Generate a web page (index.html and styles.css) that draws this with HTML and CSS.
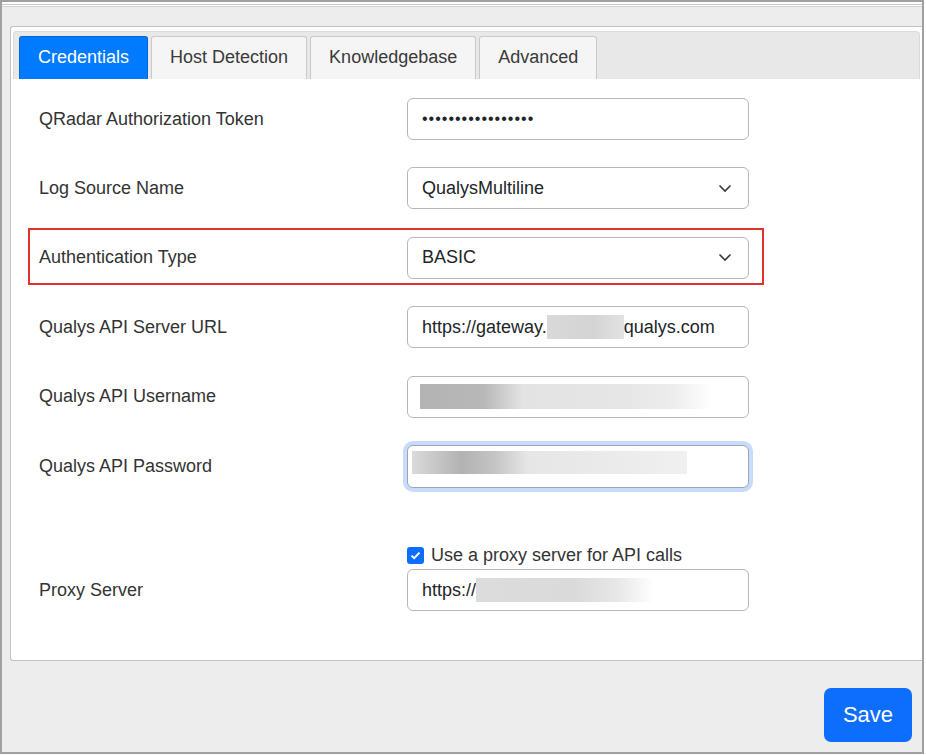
FILE: index.html
```html
<!DOCTYPE html>
<html lang="en">

<head>
    <meta charset="UTF-8">
    <meta name="viewport" content="width=device-width, initial-scale=1.0">
    <title>QRadar Qualys App Settings</title>
    <link rel="stylesheet" href="styles.css">
</head>

<body>
    <div class="frame">
        <div class="topline"></div>

        <div class="panel">
            <nav class="tabs">
                <div class="tab active">Credentials</div>
                <div class="tab">Host Detection</div>
                <div class="tab">Knowledgebase</div>
                <div class="tab">Advanced</div>
            </nav>

            <form class="settings">
                <div class="row">
                    <label>QRadar Authorization Token</label>
                    <input class="field" type="password" value="abcdefghijklmnopq">
                </div>

                <div class="row">
                    <label>Log Source Name</label>
                    <div class="field select">
                        <span>QualysMultiline</span>
                        <svg class="chevron" width="14" height="9" viewBox="0 0 14 9"><path d="M1.5 1.5 L7 7 L12.5 1.5" fill="none" stroke="#343a40" stroke-width="1.6"/></svg>
                    </div>
                </div>

                <div class="row marked">
                    <label>Authentication Type</label>
                    <div class="field select">
                        <span>BASIC</span>
                        <svg class="chevron" width="14" height="9" viewBox="0 0 14 9"><path d="M1.5 1.5 L7 7 L12.5 1.5" fill="none" stroke="#343a40" stroke-width="1.6"/></svg>
                    </div>
                </div>

                <div class="row">
                    <label>Qualys API Server URL</label>
                    <div class="field">
                        <span>https://gateway.</span><span class="blur blur-url"></span><span>qualys.com</span>
                    </div>
                </div>

                <div class="row">
                    <label>Qualys API Username</label>
                    <div class="field">
                        <span class="blur blur-user"></span>
                    </div>
                </div>

                <div class="row">
                    <label>Qualys API Password</label>
                    <div class="field focus">
                        <span class="blur blur-pass"></span>
                    </div>
                </div>

                <div class="row proxy">
                    <label>Proxy Server</label>
                    <div>
                        <div class="check">
                            <span class="box">
                                <svg width="11" height="9" viewBox="0 0 11 9"><path d="M1.5 4.6 L4.2 7.2 L9.5 1.6" fill="none" stroke="#fff" stroke-width="2"/></svg>
                            </span>
                            Use a proxy server for API calls
                        </div>
                        <div class="field">
                            <span>https://</span><span class="blur blur-proxy"></span>
                        </div>
                    </div>
                </div>
            </form>
        </div>

        <footer>
            <button class="save">Save</button>
        </footer>
    </div>
</body>

</html>
```

FILE: styles.css
```css
* {
    margin: 0;
    padding: 0;
    box-sizing: border-box;
}

body {
    background: #fff;
    font-family: "Liberation Sans", Arial, sans-serif;
    font-size: 18px;
    color: #333;
}

.frame {
    width: 924px;
    height: 754px;
    border: 2px solid #a0a0a0;
    background: #ededed;
    display: flex;
    flex-direction: column;
}

.topline {
    height: 5px;
    background: linear-gradient(#fff 0 2px, #c9c9c9 2px 3px, #fff 3px 4px, #d2d2d2 4px 5px);
}

.panel {
    margin: 19px 0 0 8px;
    padding: 4px 2px 49px 2px;
    background: #fff;
    border: 1px solid #c3c3c3;
    border-right: none;
    border-radius: 3px 0 0 3px;
}

/* tab strip */
.tabs {
    display: flex;
    gap: 3px;
    padding: 4px 5px 0;
    background: #e8e8e8;
    border: 1px solid #dadada;
    border-bottom: none;
    border-radius: 4px 4px 0 0;
}

.tab {
    height: 43px;
    line-height: 41px;
    padding: 0 18px;
    background: #f5f5f5;
    border: 1px solid #c9c9c9;
    border-bottom: none;
    border-radius: 3px 3px 0 0;
    color: #3a3a3a;
}

.tab.active {
    background: #007bff;
    border-color: #0069d9;
    color: #fff;
}

/* form rows */
.settings {
    display: flex;
    flex-direction: column;
    gap: 27.4px;
    padding: 19px 0 0 26px;
}

.row {
    display: grid;
    grid-template-columns: 368px 342px;
    align-items: center;
}

.row label {
    color: #333;
}

.row.marked {
    margin: -9px 0 -6px -11px;
    width: 736px;
    padding: 7px 0 4px 9px;
    border: 2px solid #e3312d;
}

.field {
    display: flex;
    align-items: center;
    height: 42px;
    padding: 0 14px;
    border: 1px solid #b4b8bd;
    border-radius: 6px;
    background: #fff;
    font-family: inherit;
    font-size: 18px;
    color: #212529;
    width: 342px;
    outline: none;
}

input.field[type="password"] {
    font-size: 16px;
    letter-spacing: 1px;
}

.select {
    justify-content: space-between;
}

.chevron {
    margin-right: 2px;
}

.focus {
    height: 43px;
    padding-left: 4px;
    border-color: #9ea6b0;
    box-shadow: 0 0 0 4px #c7dcfc;
}

.blur {
    display: inline-block;
    height: 24px;
}

.blur-url {
    width: 77px;
    background: linear-gradient(to right, #d9d9d9, #d4d4d4 60%, #e2e2e2);
}

.blur-user {
    width: 292px;
    height: 25px;
    margin-left: -2px;
    background: linear-gradient(to right, #b3b3b3 0, #b8b8b8 22%, #e3e3e3 35%, #e6e6e6 70%, #ececec 86%, #fff 100%);
}

.blur-pass {
    width: 275px;
    height: 23px;
    margin-top: -8px;
    background: linear-gradient(to right, #dadada 0, #b2b2b2 18%, #c4c4c4 30%, #e6e6e6 42%, #ebebeb 75%, #f0f0f0 100%);
}

.blur-proxy {
    width: 178px;
    background: linear-gradient(to right, #dcdcdc, #dadada 55%, #e8e8e8 80%, #fff);
}

.proxy {
    align-items: end;
    margin-top: 30px;
}

.proxy label {
    line-height: 42px;
}

.check {
    display: flex;
    align-items: center;
    gap: 7px;
    height: 20px;
    margin-bottom: 4px;
    color: #333;
}

.check .box {
    display: flex;
    align-items: center;
    justify-content: center;
    width: 17px;
    height: 17px;
    border-radius: 3px;
    background: #0d6efd;
}

footer {
    flex: 1;
    display: flex;
    align-items: flex-end;
    justify-content: flex-end;
    padding: 0 10px 10px 0;
}

.save {
    width: 88px;
    height: 54px;
    border: none;
    border-radius: 7px;
    background: #0d6efd;
    color: #fff;
    font-family: "Liberation Sans", Arial, sans-serif;
    font-size: 22px;
}
```
